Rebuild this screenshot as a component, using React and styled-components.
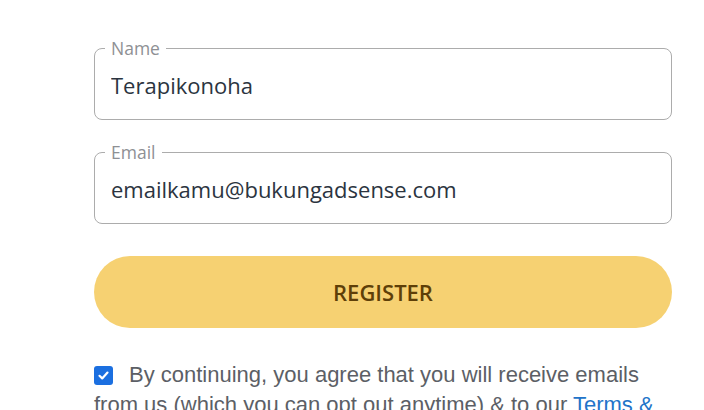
import * as React from "react";
import styled, { createGlobalStyle } from "styled-components";

const Global = createGlobalStyle`
  body {
    margin: 0;
    background: #fff;
    font-family: "Open Sans", "Noto Sans", sans-serif;
    overflow: hidden;
  }
`;

const Page = styled.div`
  padding: 38px 0 0 94px;
`;

const Form = styled.form`
  width: 578px;
  display: flex;
  flex-direction: column;
`;

const Field = styled.fieldset`
  margin: 0 0 ${(p) => p.$gap}px;
  padding: 0 10px 8px;
  border: 1px solid #acacac;
  border-radius: 8px;
`;

const Legend = styled.legend`
  padding: 0 6px;
  font-size: 17.5px;
  line-height: 20px;
  color: #8e9094;
`;

const Input = styled.input`
  display: block;
  width: 100%;
  box-sizing: border-box;
  height: 53px;
  border: none;
  outline: none;
  padding: 0 6px;
  font-family: inherit;
  font-size: 22px;
  color: #2b3440;
  background: transparent;
`;

const Button = styled.button`
  height: 72px;
  border: none;
  border-radius: 36px;
  background: #f6d172;
  color: #5e3f08;
  font-family: "Open Sans", sans-serif;
  font-weight: 600;
  font-size: 22px;
  cursor: pointer;
`;

const Consent = styled.p`
  margin: 32px 0 0;
  font-family: "Liberation Sans", Arial, sans-serif;
  font-size: 22px;
  line-height: 30px;
  color: #5c5f66;
`;

const Box = styled.span`
  display: inline-flex;
  align-items: center;
  justify-content: center;
  width: 19px;
  height: 19px;
  border-radius: 3px;
  background: #1b6fe0;
  vertical-align: 0;
  margin-right: 16px;
`;

const Link = styled.a`
  color: #2274c9;
  text-decoration: none;
`;

export default function App() {
  return (
    <Page>
      <Global />
      <Form onSubmit={(e) => e.preventDefault()}>
        <Field $gap={22}>
          <Legend>Name</Legend>
          <Input defaultValue="Terapikonoha" />
        </Field>
        <Field $gap={32}>
          <Legend>Email</Legend>
          <Input defaultValue="emailkamu@bukungadsense.com" />
        </Field>
        <Button type="submit">REGISTER</Button>
        <Consent>
          <Box>
            <svg width="13" height="13" viewBox="0 0 13 13">
              <path d="M2.5 6.8 L5.2 9.4 L10.5 3.6" fill="none" stroke="#fff" strokeWidth="2.2" strokeLinecap="round" strokeLinejoin="round" />
            </svg>
          </Box>
          By continuing, you agree that you will receive emails from us (which you can opt out anytime) &amp; to our <Link href="#">Terms &amp; Conditions</Link>.
        </Consent>
      </Form>
    </Page>
  );
}
